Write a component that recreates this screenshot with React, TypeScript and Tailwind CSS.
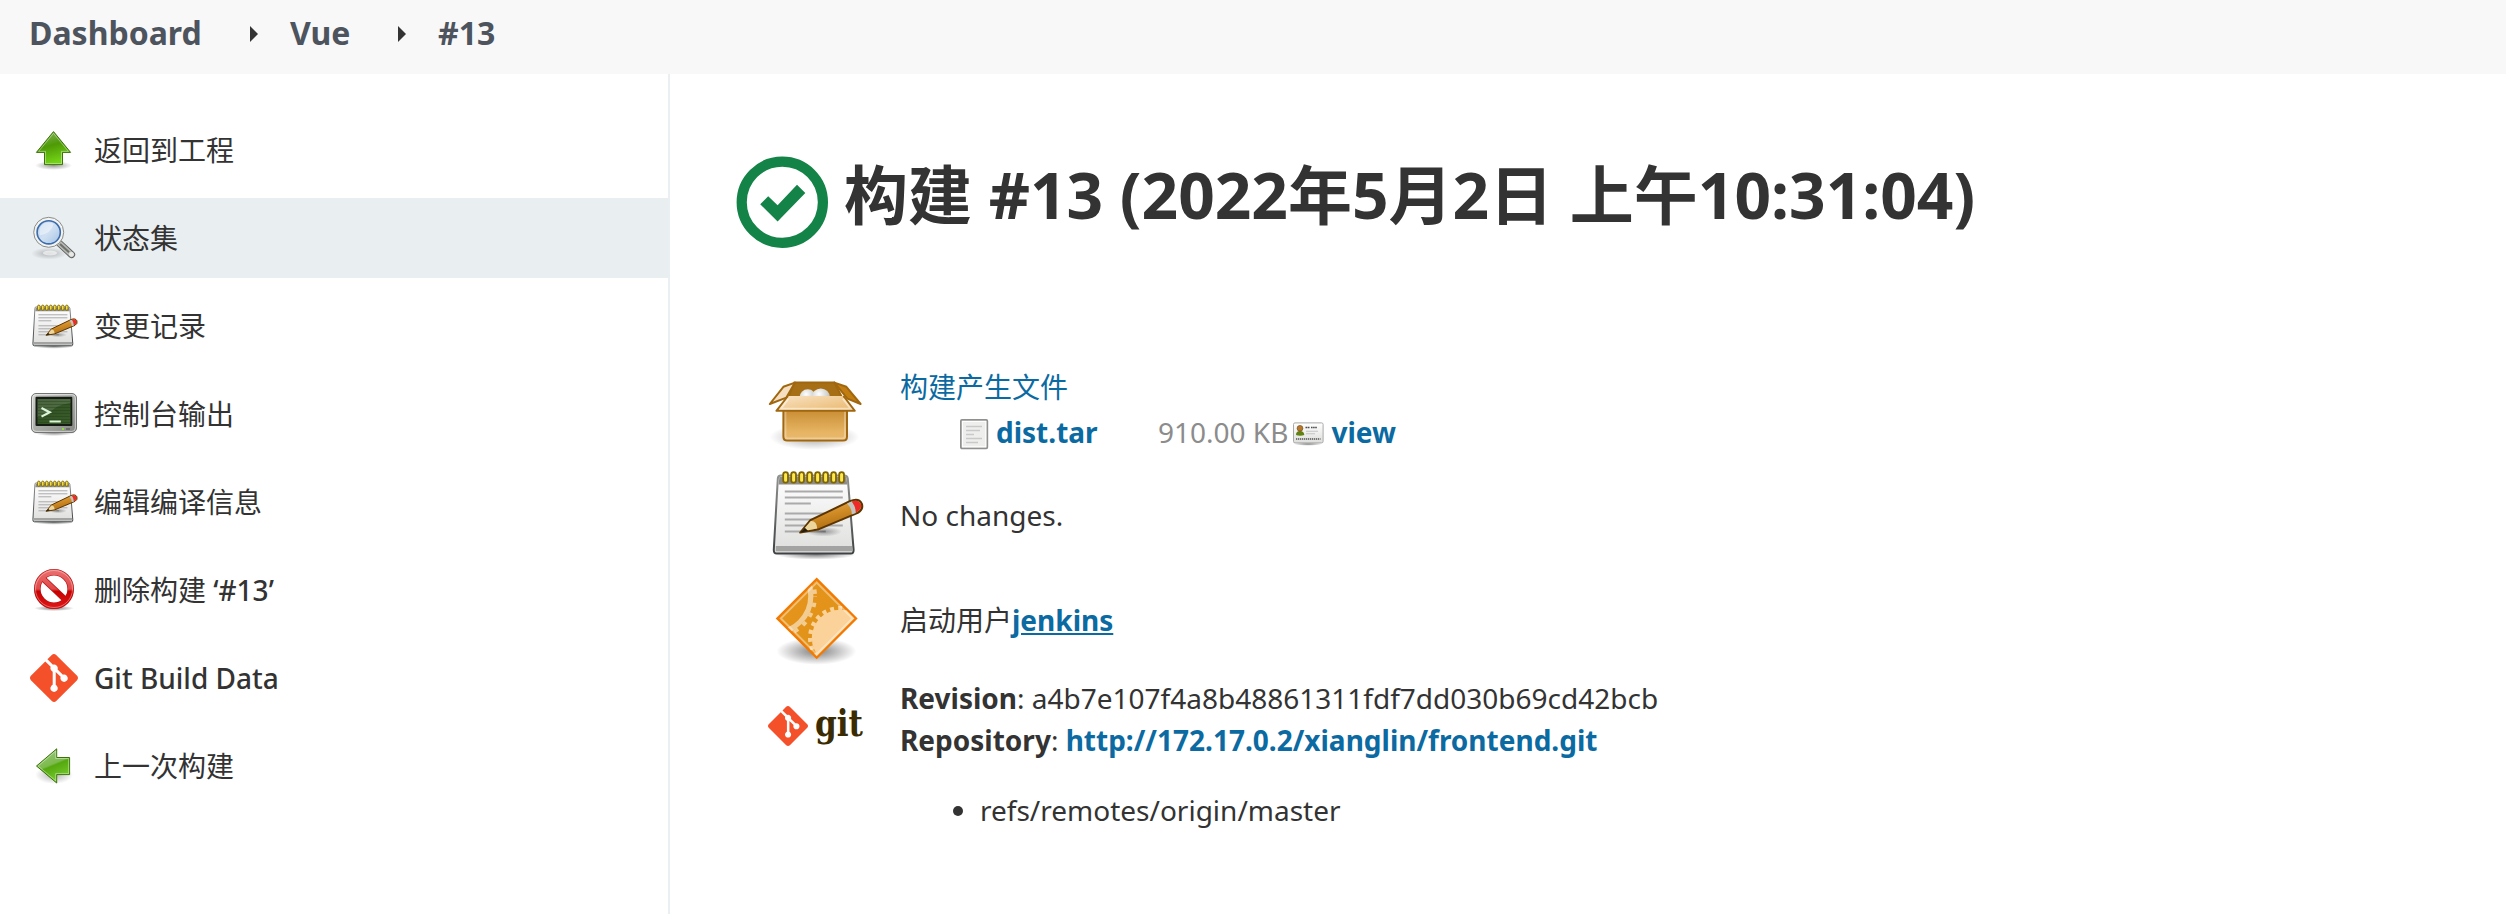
import React from "react";

const GIT_MARK =
  "M23.546 10.93L13.067.452c-.604-.603-1.582-.603-2.188 0L8.708 2.627l2.76 2.76c.645-.215 1.379-.07 1.889.441.516.515.658 1.258.438 1.9l2.658 2.66c.645-.223 1.387-.078 1.9.435.721.72.721 1.884 0 2.604-.719.719-1.881.719-2.6 0-.539-.541-.674-1.337-.404-1.996L12.86 8.955v6.525c.176.086.342.203.488.348.713.721.713 1.883 0 2.6-.719.721-1.889.721-2.609 0-.719-.719-.719-1.879 0-2.598.182-.18.387-.316.605-.406V8.835c-.217-.091-.424-.222-.6-.401-.545-.545-.676-1.342-.396-2.009L7.636 3.7.45 10.881c-.6.605-.6 1.584 0 2.189l10.48 10.477c.604.604 1.582.604 2.186 0l10.43-10.43c.605-.603.605-1.582 0-2.187";

function Defs() {
  return (
    <svg className="absolute h-0 w-0" aria-hidden="true">
      <defs>
        <linearGradient id="green" x1="0" y1="0" x2=".3" y2="1">
          <stop offset="0" stopColor="#8ab86a" />
          <stop offset=".5" stopColor="#4e9a06" />
          <stop offset="1" stopColor="#73d216" />
        </linearGradient>
        <linearGradient id="greenLeft" x1="0" y1="0" x2=".4" y2="1">
          <stop offset="0" stopColor="#9fca88" />
          <stop offset=".55" stopColor="#7cba4c" />
          <stop offset=".6" stopColor="#55a80f" />
          <stop offset="1" stopColor="#73c92a" />
        </linearGradient>
        <radialGradient id="shadow">
          <stop offset="0" stopColor="#000" stopOpacity=".5" />
          <stop offset="1" stopColor="#000" stopOpacity="0" />
        </radialGradient>
        <linearGradient id="lens" x1="0" y1="0" x2="1" y2="1">
          <stop offset="0" stopColor="#b3cdec" />
          <stop offset=".5" stopColor="#d0e0f2" />
          <stop offset="1" stopColor="#a3c2e6" />
        </linearGradient>
        <linearGradient id="paper" x1="0" y1="0" x2="0" y2="1">
          <stop offset="0" stopColor="#ffffff" />
          <stop offset="1" stopColor="#dededd" />
        </linearGradient>
        <linearGradient id="paperEdge" x1="0" y1="0" x2="0" y2="1">
          <stop offset="0" stopColor="#8f928e" />
          <stop offset="1" stopColor="#3e4244" />
        </linearGradient>
        <linearGradient id="pencil" x1="0" y1="0" x2=".4" y2="1">
          <stop offset="0" stopColor="#f0b860" />
          <stop offset=".55" stopColor="#cf8a24" />
          <stop offset="1" stopColor="#a8690f" />
        </linearGradient>
        <linearGradient id="bezel" x1="0" y1="0" x2="1" y2="1">
          <stop offset="0" stopColor="#d0d2ce" />
          <stop offset="1" stopColor="#858783" />
        </linearGradient>
        <linearGradient id="screen" x1="0" y1="0" x2="1" y2="1">
          <stop offset="0" stopColor="#2f4d22" />
          <stop offset="1" stopColor="#3a5c2a" />
        </linearGradient>
        <linearGradient id="stop" gradientUnits="userSpaceOnUse" x1="0" y1="3" x2="0" y2="43">
          <stop offset="0" stopColor="#ec7070" />
          <stop offset=".5" stopColor="#e04848" />
          <stop offset=".56" stopColor="#c80000" />
          <stop offset="1" stopColor="#e01818" />
        </linearGradient>
        <linearGradient id="boxFront" x1="0" y1="0" x2="0" y2="1">
          <stop offset="0" stopColor="#c4862b" />
          <stop offset=".75" stopColor="#e6b463" />
          <stop offset="1" stopColor="#e9b96e" />
        </linearGradient>
        <linearGradient id="boxFlap" x1="0" y1="0" x2="1" y2="1">
          <stop offset="0" stopColor="#f9e3c4" />
          <stop offset="1" stopColor="#e9b76b" />
        </linearGradient>
        <radialGradient id="ball" cx=".4" cy=".3" r=".7">
          <stop offset="0" stopColor="#ffffff" />
          <stop offset="1" stopColor="#b8b8b4" />
        </radialGradient>
        <linearGradient id="gearBack" x1="0" y1="0" x2="1" y2="1">
          <stop offset="0" stopColor="#e8961c" />
          <stop offset="1" stopColor="#dd9018" />
        </linearGradient>
        <clipPath id="diamond">
          <path d="M24.35 4.2 44.35 24.2 24.35 44.2 4.35 24.2Z" />
        </clipPath>
      </defs>
    </svg>
  );
}

type IconProps = { className?: string };
const small = "h-12 w-12 shrink-0 overflow-visible";
const large = "block h-24 w-24 overflow-visible";

function UpIcon() {
  return (
    <svg viewBox="0 0 48 48" className={small}>
      <ellipse cx="23.5" cy="39.5" rx="18.5" ry="4.5" fill="url(#shadow)" opacity=".8" />
      <path d="M23.5 5.6 40.6 26.4H32.5V38.6H14.5V26.4H6.4Z" fill="url(#green)" stroke="#3a7304" />
      <path d="M23.5 7.3 38.4 25.4H31.5V37.6H15.5V25.4H8.6Z" fill="none" stroke="#fff" strokeOpacity=".4" />
    </svg>
  );
}

function SearchIcon() {
  return (
    <svg viewBox="0 0 48 48" className={small}>
      <ellipse cx="19" cy="39.5" rx="18" ry="6" fill="url(#shadow)" opacity=".5" />
      <ellipse cx="20" cy="39" rx="7" ry="2.4" fill="#fff" opacity=".6" />
      <path d="M28.5 28.5 41.6 40.6" stroke="#5c5e5b" strokeWidth="7" strokeLinecap="round" />
      <path d="M28.5 28.5 41.6 40.6" stroke="#b9bbb7" strokeWidth="5.2" strokeLinecap="round" />
      <path d="m30 30 9 8.2" stroke="#6f716d" strokeWidth="2.2" />
      <circle cx="41.4" cy="40.3" r="2.4" fill="#e8e8e6" />
      <circle cx="18.7" cy="18.3" r="15" fill="#f3f3f1" stroke="#8b8d89" />
      <circle cx="18.7" cy="18.3" r="11.6" fill="url(#lens)" stroke="#3b6cab" strokeWidth="1.6" />
      <path d="M9.5 17.5a9 9 0 0 1 14.3-7.5Q21 19.5 9.8 21.5Z" fill="#fff" opacity=".45" />
    </svg>
  );
}

function NotepadIcon({ className }: IconProps) {
  const rings = [8.5, 12.5, 16.5, 20.5, 24.5, 28.5, 32.5, 36.5];
  return (
    <svg viewBox="-0.9 -0.3 48 48" className={className}>
      <ellipse cx="23" cy="44" rx="20" ry="2.5" fill="url(#shadow)" />
      <path d="M5.5 4.5H37.2Q38.8 4.5 39 6L41.9 41.5Q42 43.5 40.5 43.5H3.5Q1.9 43.5 2 41.5L4 6Q4.1 4.5 5.5 4.5Z" fill="url(#paper)" stroke="url(#paperEdge)" />
      <path d="M4.8 5.1H38.3L38.7 9H4.4Z" fill="#8c8d89" />
      <path d="M3 39.7H41.1V42.3H3Z" fill="#a3a4a1" />
      <path d="M7.5 12.5H36.5M7.5 15.5H36.5M7.5 18.5H20.5M7.5 23.5H36.5M7.5 26.5H36.5M7.5 29.5H36.5M7.5 32.5H28" stroke="#aaaaaa" />
      {rings.map((x) => (
        <rect key={x} x={x - 1.8} y="2.8" width="2.4" height="5.2" rx="1.2" fill="#fce94f" stroke="#806400" strokeWidth=".9" />
      ))}
      <ellipse cx="27" cy="32.5" rx="9" ry="2.5" fill="url(#shadow)" opacity=".7" />
      <path d="M15.2 33 20.3 26.8 40 17.3Q44.5 15.4 46 18.5 47 21.4 44 23.1L24 31.5Z" fill="url(#pencil)" stroke="#5c3500" strokeLinejoin="round" />
      <path d="M16 32.5 20.5 27.2Q23.5 27 23.7 31Z" fill="#ecd69c" />
      <path d="m15.3 33 2.2-2.4 1.7 1.6Z" fill="#251b0c" />
      <path d="m38.6 18.4 2.4-1q2.2 3 2 5.8l-2 .8Q41.1 20.8 38.6 18.4Z" fill="#c4c4c4" />
      <path d="M41 17.4Q44.4 16.2 45.5 18.8 46.2 21.2 43 23 43.1 20 41 17.4Z" fill="#ef2929" />
    </svg>
  );
}

function TerminalIcon() {
  return (
    <svg viewBox="0 0 48 48" className={small}>
      <ellipse cx="24" cy="42.5" rx="21" ry="3.6" fill="url(#shadow)" />
      <rect x="1.5" y="3.5" width="45" height="39" rx="4.5" fill="url(#bezel)" stroke="#737572" />
      <rect x="2.6" y="4.6" width="42.8" height="36.8" rx="3.5" fill="none" stroke="#fff" strokeOpacity=".55" />
      <rect x="5.5" y="6.8" width="36.8" height="29.2" rx="1" fill="#161c13" />
      <rect x="7.5" y="9" width="33" height="25" fill="url(#screen)" />
      <path d="M7.5 9H40.5V13Q24 15 18 25L7.5 27Z" fill="#fff" opacity=".13" />
      <path d="M8 11.5H40M8 14.5H40M8 17.5H40M8 20.5H40M8 23.5H40M8 26.5H40M8 29.5H40M8 32.5H40" stroke="#1e3813" strokeOpacity=".35" />
      <path d="m11.5 18 8.2 4.3L11.5 26.6M19.5 31.5H30.8" fill="none" stroke="#dcf5d9" strokeWidth="2.2" />
      <rect x="32" y="38" width="2" height="2" fill="#8ae234" />
      <path d="M36 39H40" stroke="#6c6e6a" strokeWidth="2" />
    </svg>
  );
}

function StopIcon() {
  return (
    <svg viewBox="0 0 48 48" className={small}>
      <ellipse cx="24" cy="42.3" rx="20" ry="2.8" fill="url(#shadow)" />
      <path d="m12.6 12.2 22.8 21.6" stroke="#b81515" strokeWidth="6" />
      <circle cx="24" cy="23" r="16.7" fill="none" stroke="#b01010" strokeWidth="6.6" />
      <circle cx="24" cy="23" r="16.7" fill="none" stroke="url(#stop)" strokeWidth="5.4" />
      <path d="m12 11.6 24 22.8" stroke="url(#stop)" strokeWidth="4.6" />
      <circle cx="24" cy="23" r="18.5" fill="none" stroke="#fff" strokeOpacity=".4" strokeWidth=".9" />
    </svg>
  );
}

function GitIcon({ className }: IconProps) {
  return (
    <svg viewBox="0 0 24 24" className={className}>
      <path d={GIT_MARK} fill="#f4502a" />
    </svg>
  );
}

function LeftIcon() {
  return (
    <svg viewBox="0 0 48 48" className={small}>
      <ellipse cx="24" cy="33" rx="19" ry="9" fill="url(#shadow)" opacity=".6" />
      <path d="M26.7 6.8V15.5H39.6V32.6H26.7V41L6.5 24Z" fill="url(#greenLeft)" stroke="#3a7304" />
      <path d="M25.7 9V16.5H38.6V31.6H25.7V38.8L8.2 24Z" fill="none" stroke="#fff" strokeOpacity=".4" />
    </svg>
  );
}

function BoxIcon() {
  return (
    <svg viewBox="-0.2 -1 48 48" className={large}>
      <ellipse cx="23" cy="34.5" rx="22.5" ry="6.5" fill="url(#shadow)" opacity=".7" />
      <path d="M13 7.3H33L38 17H9Z" fill="#a66f16" stroke="#a0670f" />
      <circle cx="19.7" cy="14.8" r="4.2" fill="url(#ball)" />
      <circle cx="26.2" cy="14.8" r="4.6" fill="url(#ball)" />
      <path d="M13.3 7.3 7.5 9.4.7 18 9 14.8Z" fill="#f5dfc0" stroke="#a0670f" strokeLinejoin="round" />
      <path d="M33 7.3 39 9.4 46.1 18 39.5 15.3Z" fill="#c17d11" stroke="#a0670f" strokeLinejoin="round" />
      <path d="M7.5 19H39.3V34.2Q39.3 36.3 37.3 36.3H9.5Q7.5 36.3 7.5 34.2Z" fill="url(#boxFront)" stroke="#a0670f" />
      <path d="M8.5 21V34Q8.5 35.3 9.8 35.3H37Q38.3 35.3 38.3 34V21" fill="none" stroke="#fff" strokeOpacity=".3" />
      <path d="M9.8 14H37.5L43.2 21.4H4Z" fill="url(#boxFlap)" />
      <path d="M9.8 14 4 21.4H43.2L37.5 14" fill="none" stroke="#a0670f" strokeLinejoin="round" />
      <path d="M10 15.3 6.2 20.4H41.2L37.3 15.3" fill="none" stroke="#fff" strokeOpacity=".5" />
    </svg>
  );
}

function GearIcon() {
  return (
    <svg viewBox="0 0 48 48" className={large}>
      <ellipse cx="24.2" cy="40.6" rx="20" ry="6.8" fill="url(#shadow)" />
      <path d="M24.35 4.2 44.35 24.2 24.35 44.2 4.35 24.2Z" fill="url(#gearBack)" />
      <g clipPath="url(#diamond)">
        <circle cx="3" cy="13" r="18.4" fill="none" stroke="#f3cc92" strokeWidth="2.6" />
        <circle cx="3" cy="13" r="20.5" fill="none" stroke="#f3cc92" strokeWidth="2" strokeDasharray="2.2 3.1" strokeDashoffset="1.9" />
        <circle cx="36" cy="34" r="14.1" fill="#fad29a" />
        <circle cx="36" cy="34" r="14.9" fill="none" stroke="#fad29a" strokeWidth="2.2" strokeDasharray="2 2.07" />
      </g>
      <path d="M24.35 6.3 42.25 24.2 24.35 42.1 6.45 24.2Z" fill="none" stroke="#fff" strokeOpacity=".4" />
      <path d="M24.35 4.5 44.05 24.2 24.35 43.9 4.65 24.2Z" fill="none" stroke="#f57900" strokeWidth="1.1" />
    </svg>
  );
}

function SuccessIcon() {
  return (
    <svg viewBox="0 0 96 96" className="h-24 w-24 shrink-0">
      <circle cx="48.3" cy="48.2" r="40.6" fill="none" stroke="#138347" strokeWidth="10.2" />
      <path d="m26.2 50.2 8-8 9.4 9L63 30.8l8.3 8.2L43.6 67.4Z" fill="#138347" />
    </svg>
  );
}

function FileIcon() {
  return (
    <svg viewBox="0 0 32 32" className="mt-1 h-8 w-8">
      <rect x="2.9" y="1.9" width="26.4" height="28.4" rx="1" fill="#eeeeed" stroke="#90918f" strokeWidth="1.8" />
      <rect x="4.4" y="3.4" width="23.4" height="25.4" fill="none" stroke="#fff" />
      <path d="M8 8.5H24M8 12.5H22M8 16.5H16M8 20.5H24M8 24.5H20" stroke="#c9c9c9" strokeWidth="1.7" />
    </svg>
  );
}

function CardIcon() {
  return (
    <svg viewBox="0 0 32 32" className="mt-1 h-8 w-8">
      <ellipse cx="16" cy="26" rx="14" ry="1.8" fill="url(#shadow)" />
      <rect x="1.5" y="4.9" width="29.6" height="20" rx="1.5" fill="url(#paper)" stroke="#a9aaa7" />
      <path d="M4 17Q4 13 8 13T12.3 17Q8 18.5 4 17Z" fill="#5f8213" />
      <circle cx="8" cy="10.3" r="2.9" fill="#b9772c" stroke="#6b4610" strokeWidth=".6" />
      <path d="M13.5 9.5H18M19 9.5H25" stroke="#4d4d4d" strokeWidth="1.5" strokeDasharray="1.6 .5" />
      <path d="M14 13.3H26M14 15.7H23" stroke="#c4c4c4" strokeWidth="1.1" />
      <path d="M4 21H28.5" stroke="#777" strokeWidth="2" strokeDasharray="1.3 .7" />
    </svg>
  );
}

function GitLogo() {
  return (
    <div className="flex h-[98px] w-24 items-center">
      <GitIcon className="h-10 w-10 shrink-0" />
      <svg viewBox="0 0 56 60" className="h-[60px] w-14 shrink-0 overflow-visible">
        <text x="7" y="39.5" textLength="48" lengthAdjust="spacingAndGlyphs" className="fill-[#3a2b00] font-['DejaVu_Serif',serif] text-[37px] font-bold">
          git
        </text>
      </svg>
    </div>
  );
}

const menu = [
  { icon: <UpIcon />, label: "返回到工程" },
  { icon: <SearchIcon />, label: "状态集", active: true },
  { icon: <NotepadIcon className={small} />, label: "变更记录" },
  { icon: <TerminalIcon />, label: "控制台输出" },
  { icon: <NotepadIcon className={small} />, label: "编辑编译信息" },
  { icon: <StopIcon />, label: "删除构建 ", latin: "‘#13’" },
  { icon: <GitIcon className={small} />, label: "", latin: "Git Build Data" },
  { icon: <LeftIcon />, label: "上一次构建" },
];

function Separator() {
  return (
    <svg viewBox="0 0 8 16" className="h-4 w-2">
      <path d="M0 0 8 8 0 16Z" fill="#333" />
    </svg>
  );
}

export default function App() {
  return (
    <div className="flex h-[914px] flex-col overflow-hidden bg-white font-['Noto_Sans','Noto_Sans_CJK_SC',sans-serif] text-[28px] leading-[42px] text-[#333]">
      <Defs />
      <header className="flex h-[74px] shrink-0 items-center bg-[#f8f8f8] pb-1.5 pl-[29px] text-[32px] font-bold text-[#4d545d]">
        <a className="-mt-0.5 w-[221px]">Dashboard</a>
        <Separator />
        <a className="-mt-0.5 w-[108px] pl-8">Vue</a>
        <span className="flex pl-8"><Separator /></span>
        <a className="-mt-0.5 pl-8">#13</a>
      </header>
      <div className="flex grow">
        <aside className="flex w-[670px] shrink-0 flex-col gap-2 border-r-2 border-[#eaeff2] pt-9">
          {menu.map((item) => (
            <a
              key={item.label}
              className={
                item.active
                  ? "flex h-20 items-center gap-4 bg-[#e9eef1] pl-[30px]"
                  : "flex h-20 items-center gap-4 pl-[30px]"
              }
            >
              {item.icon}
              <span className="whitespace-pre">
                {item.label}
                {item.latin && <span className="font-medium">{item.latin}</span>}
              </span>
            </a>
          ))}
        </aside>
        <main className="grow pl-16 pt-20">
          <h1 className="flex h-24 items-center text-[64px] leading-[96px] font-bold">
            <SuccessIcon />
            <span className="-mt-3.5 pl-3.5">构建 #13 (2022年5月2日 上午10:31:04)</span>
          </h1>
          <div className="grid grid-cols-[96px_1fr] gap-x-9 pl-[34px] pt-[116px]">
            <div className="h-[100px]"><BoxIcon /></div>
            <div>
              <a className="block text-[#0b6aa2]">构建产生文件</a>
              <div className="flex h-12 items-center pl-[58px]">
                <FileIcon />
                <a className="w-[168px] pl-1.5 font-bold text-[#0b6aa2]">dist.tar</a>
                <span className="text-[#8c8c8c]">910.00 KB</span>
                <span className="pl-1"><CardIcon /></span>
                <a className="pl-[7px] font-bold text-[#0b6aa2]">view</a>
              </div>
            </div>
            <div className="h-[104px]"><NotepadIcon className={large} /></div>
            <div className="pt-7">No changes.</div>
            <div className="h-[107px]"><GearIcon /></div>
            <div className="pt-[29px]">
              启动用户<a className="font-bold text-[#0b6aa2] underline">jenkins</a>
            </div>
            <GitLogo />
            <div>
              <p><b>Revision</b>: a4b7e107f4a8b48861311fdf7dd030b69cd42bcb</p>
              <p><b>Repository</b>: <a className="font-bold text-[#0b6aa2]">http://172.17.0.2/xianglin/frontend.git</a></p>
              <ul className="list-disc pl-20 pt-7"><li>refs/remotes/origin/master</li></ul>
            </div>
          </div>
        </main>
      </div>
    </div>
  );
}
